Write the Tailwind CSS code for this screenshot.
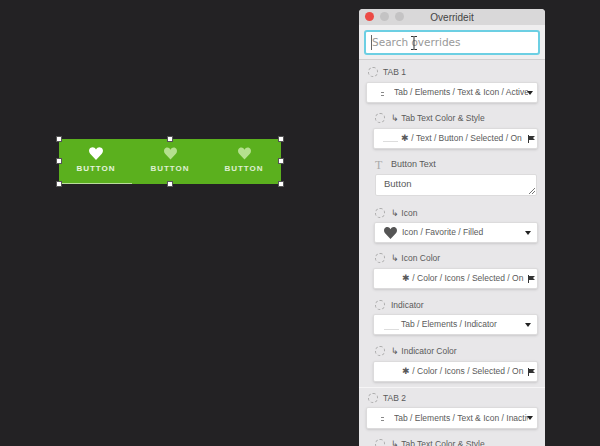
<!DOCTYPE html>
<html lang="en">
<head>
<meta charset="UTF-8">
<title>Overrideit</title>
<script src="https://cdn.jsdelivr.net/npm/@tailwindcss/browser@4"></script>
</head>
<body class="bg-[#232224] overflow-hidden font-['Liberation_Sans',sans-serif]">
<div class="relative w-[600px] h-[446px] overflow-hidden">

  <!-- artboard selection -->
  <div class="absolute left-[59px] top-[139px] w-[222px] h-[45px] bg-[#5bb01e] flex">
    <div class="flex-1 flex flex-col items-center pt-[8px] text-white">
      <svg width="14" height="13" viewBox="0 0 24 22" fill="currentColor"><path d="M12 22 2 11.500C-1 8-.5 3 3 1s7-.5 9 3c2-3.500 5.500-5 9-3s4 7 1 10.500z"/></svg>
      <span class="mt-[4px] text-[8px] leading-[10px] font-bold tracking-[1px] text-white/85">BUTTON</span>
    </div>
    <div class="flex-1 flex flex-col items-center pt-[8px] text-[#b5e08f]">
      <svg width="13" height="13" viewBox="0 0 24 22" fill="currentColor"><path d="M12 22 2 11.500C-1 8-.5 3 3 1s7-.5 9 3c2-3.500 5.500-5 9-3s4 7 1 10.500z"/></svg>
      <span class="mt-[4px] text-[8px] leading-[10px] font-bold tracking-[1px] text-white/80">BUTTON</span>
    </div>
    <div class="flex-1 flex flex-col items-center pt-[8px] text-[#b5e08f]">
      <svg width="13" height="13" viewBox="0 0 24 22" fill="currentColor"><path d="M12 22 2 11.500C-1 8-.5 3 3 1s7-.5 9 3c2-3.500 5.500-5 9-3s4 7 1 10.500z"/></svg>
      <span class="mt-[4px] text-[8px] leading-[10px] font-bold tracking-[1px] text-white/80">BUTTON</span>
    </div>
    <div class="absolute left-0 bottom-0 w-[73px] h-[1px] bg-[#b9dd9c]"></div>
    <span class="absolute left-[-3px] top-[-3px] w-[6px] h-[6px] bg-white border border-[#555]"></span>
    <span class="absolute left-[108px] top-[-3px] w-[6px] h-[6px] bg-white border border-[#555]"></span>
    <span class="absolute right-[-3px] top-[-3px] w-[6px] h-[6px] bg-white border border-[#555]"></span>
    <span class="absolute left-[-3px] top-[19px] w-[6px] h-[6px] bg-white border border-[#555]"></span>
    <span class="absolute right-[-3px] top-[19px] w-[6px] h-[6px] bg-white border border-[#555]"></span>
    <span class="absolute left-[-3px] bottom-[-3px] w-[6px] h-[6px] bg-white border border-[#555]"></span>
    <span class="absolute left-[108px] bottom-[-3px] w-[6px] h-[6px] bg-white border border-[#555]"></span>
    <span class="absolute right-[-3px] bottom-[-3px] w-[6px] h-[6px] bg-white border border-[#555]"></span>
  </div>

  <!-- plugin window -->
  <div class="absolute left-[359px] top-[9px] w-[186px] h-[437px] bg-[#e8e7e9] rounded-t-[4px] overflow-hidden text-[#5a5a5a] text-[8.5px]">
    <div class="relative h-[16px] bg-[#d9d8d9] flex items-center justify-center text-[#444] text-[10px]">
      <div class="absolute left-[6px] top-[3px] flex gap-[6px]">
        <span class="w-[9px] h-[9px] rounded-full bg-[#ec4a45]"></span>
        <span class="w-[9px] h-[9px] rounded-full bg-[#c4c3c4]"></span>
        <span class="w-[9px] h-[9px] rounded-full bg-[#c4c3c4]"></span>
      </div>
      Overrideit
    </div>

    <div class="h-[35px] bg-[#efeeef] border-b border-[#d0cfd0] px-[5px] pt-[5px]">
      <div class="relative h-[25px] bg-white rounded-[3px] border-2 border-[#6ccfe3] flex items-center pl-[5px] font-['DejaVu_Sans',sans-serif] text-[10.5px] text-[#999]">
        <span class="w-px h-[15px] bg-[#666]"></span>Search overrides
        <svg class="absolute left-[45px] top-[4px]" width="6" height="14" viewBox="0 0 6 14" fill="none" stroke="#333"><path d="M0 .5h2.500l.5.5.5-.5H6M3 1v12M0 13.500h2.500l.5-.5.5.5H6"/></svg>
      </div>
    </div>

    <div class="pt-[5px] flex flex-col">
      <!-- TAB 1 -->
      <div class="h-[14px] pl-[9px] flex items-center gap-[5px]">
        <span class="w-[10px] h-[10px] rounded-full border border-dashed border-[#aaa]"></span>TAB 1
      </div>
      <div class="relative mt-[3px] mx-[7px] h-[21px] bg-white rounded-[2px] border border-[#dcdbdc] flex items-center pl-[27px] shadow-sm overflow-hidden">
        <span class="absolute left-[14px] top-[9px] w-[3px] h-[4px] border-y border-[#888]"></span>
        <span class="w-[134px] overflow-hidden whitespace-nowrap">Tab / Elements / Text &amp; Icon / Active</span>
        <span class="absolute right-0 top-0 h-full w-[10px] flex items-center">
          <span class="w-0 h-0 border-x-[3.5px] border-x-transparent border-t-[4px] border-t-[#222]"></span>
        </span>
      </div>

      <div class="mt-[8px] h-[14px] pl-[16px] flex items-center gap-[6px]">
        <span class="w-[10px] h-[10px] rounded-full border border-dashed border-[#aaa]"></span>↳ Tab Text Color &amp; Style
      </div>
      <div class="relative mt-[3px] ml-[14px] mr-[7px] h-[21px] bg-white rounded-[2px] border border-[#dcdbdc] flex items-center pl-[27px] shadow-sm overflow-hidden">
        <span class="absolute left-[9px] top-[12px] w-[15px] h-px bg-[#ddd]"></span>
        <span class="whitespace-nowrap">✱ / Text / Button / Selected / On</span>
        <svg class="absolute right-[2px] top-[6px]" width="7" height="8" viewBox="0 0 7 8" fill="#333"><path d="M0 0h1v8H0zM1 1h6L5 3l2 2H1z"/></svg>
      </div>

      <div class="mt-[8px] h-[14px] pl-[16px] pt-px flex items-center gap-[6px]">
        <span class="w-[10px] font-['Liberation_Serif',serif] text-[12px] text-[#aaa]">T</span><span class="text-[9px]">Button Text</span>
      </div>
      <div class="relative mt-[3px] ml-[16px] mr-[8px] h-[22px] bg-white rounded-[2px] border border-[#dcdbdc] flex items-center pl-[8px] pb-px text-[9.5px]">
        Button
        <svg class="absolute right-[1px] bottom-[1px]" width="6" height="6" viewBox="0 0 6 6" stroke="#777" fill="none"><path d="M0 6 6 0M3 6 6 3"/></svg>
      </div>

      <div class="mt-[10px] h-[14px] pl-[16px] flex items-center gap-[6px]">
        <span class="w-[10px] h-[10px] rounded-full border border-dashed border-[#aaa]"></span>↳ Icon
      </div>
      <div class="mt-[2px] ml-[15px] mr-[7px] h-[21px] bg-white rounded-[2px] border border-[#dcdbdc] flex items-center pl-[9px] pr-[6px] shadow-sm">
        <svg class="mr-[5px]" width="13" height="12" viewBox="0 0 24 22" fill="#555"><path d="M12 22 2 11.500C-1 8-.5 3 3 1s7-.5 9 3c2-3.500 5.500-5 9-3s4 7 1 10.500z"/></svg>
        <span class="flex-1 whitespace-nowrap">Icon / Favorite / Filled</span>
        <span class="w-0 h-0 border-x-[3.5px] border-x-transparent border-t-[4px] border-t-[#222]"></span>
      </div>

      <div class="mt-[8px] h-[14px] pl-[16px] flex items-center gap-[6px]">
        <span class="w-[10px] h-[10px] rounded-full border border-dashed border-[#aaa]"></span>↳ Icon Color
      </div>
      <div class="relative mt-[3px] ml-[14px] mr-[7px] h-[21px] bg-white rounded-[2px] border border-[#dcdbdc] flex items-center pl-[28px] shadow-sm overflow-hidden">
        <span class="whitespace-nowrap">✱ / Color / Icons / Selected / On</span>
        <svg class="absolute right-[2px] top-[6px]" width="7" height="8" viewBox="0 0 7 8" fill="#333"><path d="M0 0h1v8H0zM1 1h6L5 3l2 2H1z"/></svg>
      </div>

      <div class="mt-[9px] h-[14px] pl-[16px] flex items-center gap-[6px]">
        <span class="w-[10px] h-[10px] rounded-full border border-dashed border-[#aaa]"></span>Indicator
      </div>
      <div class="relative mt-[2px] ml-[14px] mr-[7px] h-[21px] bg-white rounded-[2px] border border-[#dcdbdc] flex items-center pl-[27px] pr-[6px] shadow-sm">
        <span class="absolute left-[10px] top-[14px] w-[15px] h-px bg-[#ddd]"></span>
        <span class="flex-1 whitespace-nowrap">Tab / Elements / Indicator</span>
        <span class="w-0 h-0 border-x-[3.5px] border-x-transparent border-t-[4px] border-t-[#222]"></span>
      </div>

      <div class="mt-[9px] h-[14px] pl-[16px] flex items-center gap-[6px]">
        <span class="w-[10px] h-[10px] rounded-full border border-dashed border-[#aaa]"></span>↳ Indicator Color
      </div>
      <div class="relative mt-[3px] ml-[14px] mr-[7px] h-[21px] bg-white rounded-[2px] border border-[#dcdbdc] flex items-center pl-[28px] shadow-sm overflow-hidden">
        <span class="whitespace-nowrap">✱ / Color / Icons / Selected / On</span>
        <svg class="absolute right-[2px] top-[6px]" width="7" height="8" viewBox="0 0 7 8" fill="#333"><path d="M0 0h1v8H0zM1 1h6L5 3l2 2H1z"/></svg>
      </div>

      <div class="mt-[5px] h-px bg-[#f6f5f6]"></div>

      <!-- TAB 2 -->
      <div class="mt-[3px] h-[14px] pl-[9px] flex items-center gap-[5px]">
        <span class="w-[10px] h-[10px] rounded-full border border-dashed border-[#aaa]"></span>TAB 2
      </div>
      <div class="relative mt-[2px] mx-[7px] h-[22px] bg-white rounded-[2px] border border-[#dcdbdc] flex items-center pl-[27px] shadow-sm overflow-hidden">
        <span class="absolute left-[14px] top-[9px] w-[3px] h-[4px] border-y border-[#888]"></span>
        <span class="w-[134px] overflow-hidden whitespace-nowrap">Tab / Elements / Text &amp; Icon / Inactive</span>
        <span class="absolute right-0 top-0 h-full w-[10px] flex items-center">
          <span class="w-0 h-0 border-x-[3.5px] border-x-transparent border-t-[4px] border-t-[#222]"></span>
        </span>
      </div>

      <div class="mt-[8px] h-[14px] pl-[16px] flex items-center gap-[6px]">
        <span class="w-[10px] h-[10px] rounded-full border border-dashed border-[#aaa]"></span>↳ Tab Text Color &amp; Style
      </div>
    </div>
  </div>
</div>
</body>
</html>
